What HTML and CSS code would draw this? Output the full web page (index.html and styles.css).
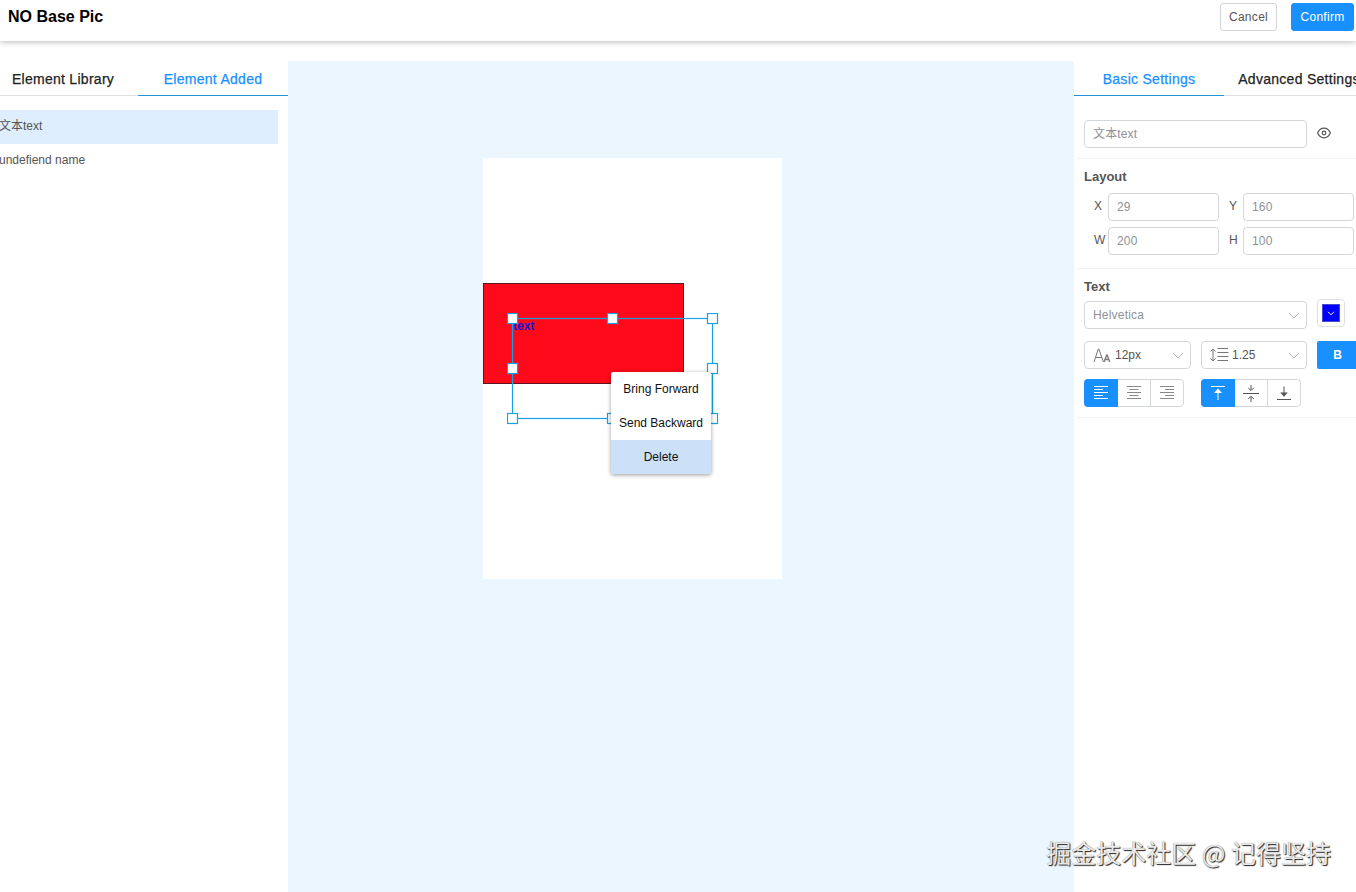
FILE: index.html
```html
<!DOCTYPE html>
<html>

<head>
  <meta charset="utf-8">
  <title>NO Base Pic</title>
  <link rel="stylesheet" href="styles.css">
</head>

<body>
  <div class="header">
    <div class="title">NO Base Pic</div>
    <button class="btn" type="button">Cancel</button>
    <button class="btn primary" type="button">Confirm</button>
  </div>

  <div class="main">
    <div class="left">
      <div class="tabs left-tabs">
        <div class="tab library">Element Library</div>
        <div class="tab added active">Element Added</div>
      </div>
      <div class="list">
        <div class="item selected">文本text</div>
        <div class="item">undefiend name</div>
      </div>
    </div>

    <div class="stage">
      <div class="artboard">
        <div class="rect"></div>
        <div class="label">text</div>
        <svg class="selection" width="212" height="112" viewBox="0 0 212 112">
          <rect class="frame" x="5.500" y="5.500" width="200" height="100"/>
          <rect x=".5" y=".5" width="10" height="10"/>
          <rect x="100.500" y=".5" width="10" height="10"/>
          <rect x="200.500" y=".5" width="10" height="10"/>
          <rect x=".5" y="50.500" width="10" height="10"/>
          <rect x="200.500" y="50.500" width="10" height="10"/>
          <rect x=".5" y="100.500" width="10" height="10"/>
          <rect x="100.500" y="100.500" width="10" height="10"/>
          <rect x="200.500" y="100.500" width="10" height="10"/>
        </svg>
        <div class="menu">
          <div class="menu-item">Bring Forward</div>
          <div class="menu-item">Send Backward</div>
          <div class="menu-item hover">Delete</div>
        </div>
      </div>
    </div>

    <div class="right">
      <div class="tabs">
        <div class="tab basic active">Basic Settings</div>
        <div class="tab advanced">Advanced Settings</div>
      </div>

      <div class="section name-section">
        <input class="input wide" type="text" value="文本text">
        <svg class="eye" width="14" height="12" viewBox="0 0 14 12">
          <path d="M.6 6C2 3 4.2 1.2 7 1.2S12 3 13.4 6C12 9 9.800 10.800 7 10.800S2 9 .6 6z"/>
          <circle cx="7" cy="6" r="1.800"/>
        </svg>
      </div>

      <div class="section layout-section">
        <div class="heading">Layout</div>
        <div class="grid">
          <label>X</label><input class="input" type="text" value="29">
          <label>Y</label><input class="input" type="text" value="160">
          <label>W</label><input class="input" type="text" value="200">
          <label>H</label><input class="input" type="text" value="100">
        </div>
      </div>

      <div class="section text-section">
        <div class="heading">Text</div>
        <div class="row font-row">
          <div class="select wide">
            <span class="value muted">Helvetica</span>
            <svg class="arrow" width="12" height="7" viewBox="0 0 12 7"><path d="M1 1l5 5 5-5"/></svg>
          </div>
          <div class="picker">
            <div class="color">
              <svg width="8" height="5" viewBox="0 0 8 5"><path d="M1 .8l3 3 3-3"/></svg>
            </div>
          </div>
        </div>
        <div class="row size-row">
          <div class="select size">
            <svg class="icon" width="18" height="15" viewBox="0 0 18 15">
              <path d="M1 14L5.300 1h.6L10.400 14M2.600 9.500h6.300"/>
              <path class="thick" d="M11 14l2.700-7h.4l2.700 7M12 11.500h3.800"/>
            </svg>
            <span class="value">12px</span>
            <svg class="arrow" width="12" height="7" viewBox="0 0 12 7"><path d="M1 1l5 5 5-5"/></svg>
          </div>
          <div class="select line">
            <svg class="icon" width="19" height="14" viewBox="0 0 19 14">
              <path d="M3 1v12M.5 3.500L3 1l2.500 2.500M.5 10.500L3 13l2.500-2.500M7.500 .5H18M7.500 4.500H18.500M7.500 8.500H18.500M7.500 12.500H18"/>
            </svg>
            <span class="value">1.25</span>
            <svg class="arrow" width="12" height="7" viewBox="0 0 12 7"><path d="M1 1l5 5 5-5"/></svg>
          </div>
          <button class="bold" type="button">B</button>
        </div>
        <div class="row align-row">
          <div class="group">
            <div class="cell on">
              <svg width="14" height="14" viewBox="0 0 14 14"><path d="M0 .5h14M0 3.500h9M0 6.500h14M0 9.500h9M0 12.500h14"/></svg>
            </div>
            <div class="cell">
              <svg width="14" height="14" viewBox="0 0 14 14"><path d="M0 .5h14M2.500 3.500h9M0 6.500h14M2.500 9.500h9M0 12.500h14"/></svg>
            </div>
            <div class="cell">
              <svg width="14" height="14" viewBox="0 0 14 14"><path d="M0 .5h14M5 3.500h9M0 6.500h14M5 9.500h9M0 12.500h14"/></svg>
            </div>
          </div>
          <div class="group">
            <div class="cell on">
              <svg width="14" height="16" viewBox="0 0 14 16"><path d="M0 1.500h14M7 4v11"/><path class="fill" d="M7 3.500L11 8H3z"/></svg>
            </div>
            <div class="cell dark">
              <svg width="16" height="18" viewBox="0 0 16 18"><path d="M0 9.500h16M8 1v5M8 18v-5M5.200 3.800L8 6.600l2.800-2.800M5.200 15L8 12.200l2.800 2.800"/></svg>
            </div>
            <div class="cell dark">
              <svg width="14" height="16" viewBox="0 0 14 16"><path d="M7 1.500v9"/><path d="M0 14.500h14"/><path class="fill" d="M7 11.800L3.200 7.500h7.600z"/></svg>
            </div>
          </div>
        </div>
      </div>
    </div>
  </div>

  <div class="watermark">掘金技术社区 @ 记得坚持</div>
</body>

</html>
```

FILE: styles.css
```css
* {
  box-sizing: border-box;
}

body {
  margin: 0;
  height: 892px;
  overflow: hidden;
  background: #fff;
  color: #555;
  font-family: "Liberation Sans", "Noto Sans CJK SC", sans-serif;
  font-size: 12px;
}

svg {
  display: block;
  flex: none;
  fill: none;
  stroke: currentColor;
}

.header {
  display: flex;
  height: 41px;
  padding: 3px 2px 0 8px;
  box-shadow: 0 1px 6px rgba(0, 0, 0, 0.28);
}

.title {
  flex: 1;
  color: #000;
  font-size: 16px;
  font-weight: bold;
  line-height: 27px;
}

.btn {
  height: 28px;
  width: 57px;
  padding: 0;
  border: 1px solid #d4d4d8;
  border-radius: 3px;
  background: #fff;
  color: #555;
  font-family: inherit;
  font-size: 12px;
  letter-spacing: 0.3px;
}

.btn.primary {
  width: 63px;
  margin-left: 14px;
  border-color: #1890ff;
  background: #1890ff;
  color: #fff;
}

.main {
  display: flex;
  height: 831px;
  margin-top: 20px;
}

.left {
  width: 288px;
  overflow: hidden;
}

.tabs {
  display: flex;
  width: 300px;
  height: 35px;
}

.left-tabs {
  margin-left: -12px;
}

.tab {
  width: 150px;
  border-bottom: 1px solid #dfe1e5;
  color: #222;
  font-size: 14px;
  letter-spacing: 0.28px;
  line-height: 36px;
  text-align: center;
  white-space: nowrap;
  -webkit-text-stroke: 0.25px;
}

.tab.active {
  border-bottom-color: #2593dc;
  color: #1890ff;
}

.list {
  width: 278px;
  margin-top: 14px;
}

.item {
  height: 34px;
  margin-left: -1px;
  line-height: 32px;
}

.item.selected {
  background: #dfeefe;
}

.stage {
  width: 786px;
  padding: 97px 0 0 195px;
  background: #ebf6ff;
}

.artboard {
  position: relative;
  width: 299px;
  height: 421px;
  background: #fff;
}

.rect {
  position: absolute;
  left: 0;
  top: 125px;
  width: 201px;
  height: 101px;
  border: 1px solid #5a1520;
  background: #ff0a1b;
}

.label {
  position: absolute;
  left: 30px;
  top: 161px;
  color: #1414d8;
  font-weight: bold;
  line-height: 14px;
}

.selection {
  position: absolute;
  left: 24px;
  top: 155px;
  fill: #fff;
  stroke: #18a0e6;
  stroke-width: 1.200;
}

.selection .frame {
  fill: none;
}

.menu {
  position: absolute;
  left: 128px;
  top: 214px;
  width: 100px;
  border-radius: 2px;
  background: #fff;
  box-shadow: 0 1px 4px rgba(0, 0, 0, 0.4);
  color: #111;
}

.menu-item {
  height: 34px;
  line-height: 34px;
  text-align: center;
  white-space: nowrap;
}

.menu-item.hover {
  background: #cce0f8;
}

.right {
  width: 282px;
  overflow: hidden;
}

.section {
  margin-left: 3px;
  padding-left: 7px;
  border-bottom: 1px solid #f1f2f3;
}

.input,
.select {
  height: 28px;
  border: 1px solid #d4d7da;
  border-radius: 4px;
  background: #fff;
}

.input {
  width: 111px;
  padding: 0 8px;
  color: #8e9296;
  font-family: inherit;
  font-size: 12px;
  letter-spacing: 0.15px;
}

.input.wide,
.select.wide {
  width: 223px;
}

.input.wide {
  padding-bottom: 3px;
}

.name-section {
  display: flex;
  height: 63px;
  padding-top: 24px;
}

.eye {
  margin: 7px 0 0 10px;
  stroke-width: 1.200;
}

.heading {
  font-size: 13px;
  font-weight: bold;
  line-height: 16px;
}

.layout-section {
  height: 110px;
  padding-top: 10px;
}

.grid {
  display: grid;
  grid-template-columns: 24px 111px 24px 111px;
  row-gap: 6px;
  margin-top: 8px;
}

.grid label {
  padding-left: 10px;
  line-height: 26px;
}

.text-section {
  height: 149px;
  padding-top: 10px;
}

.row {
  display: flex;
  gap: 10px;
}

.select {
  display: flex;
  flex: none;
  align-items: center;
  padding: 0 6px 0 8px;
}

.value {
  flex: 1;
}

.muted {
  color: #8e9296;
  letter-spacing: 0.2px;
}

.arrow {
  stroke: #b4b8be;
}

.font-row {
  margin-top: 6px;
}

.picker {
  width: 28px;
  height: 28px;
  margin-top: -2px;
  padding: 4px;
  border: 1px solid #dcdfe6;
  border-radius: 4px;
}

.color {
  display: flex;
  align-items: center;
  justify-content: center;
  height: 18px;
  border: 1px solid #4a4ad0;
  background: #0000ff;
  color: #fff;
}

.size-row {
  margin-top: 12px;
}

.size {
  width: 107px;
}

.line {
  width: 106px;
}

.icon {
  margin-right: 4px;
  color: #777;
}

.line .icon {
  margin-right: 3px;
}

.thick {
  stroke-width: 1.300;
}

.bold {
  flex: none;
  width: 41px;
  height: 28px;
  padding: 0;
  border: 0;
  border-radius: 2px;
  background: #1890ff;
  color: #fff;
  font-family: inherit;
  font-size: 12px;
  font-weight: bold;
}

.align-row {
  gap: 17px;
  margin-top: 10px;
}

.group {
  display: flex;
  width: 100px;
  height: 28px;
  border: 1px solid #d4d7da;
  border-radius: 4px;
}

.cell {
  display: flex;
  flex: 1;
  align-items: center;
  justify-content: center;
  color: #888;
}

.cell + .cell + .cell {
  border-left: 1px solid #d4d7da;
}

.cell.dark {
  color: #555;
}

.cell.on {
  flex: none;
  width: 34px;
  margin: -1px 0 -1px -1px;
  border-radius: 4px 0 0 4px;
  background: #1890ff;
  color: #fff;
}

.fill {
  fill: currentColor;
  stroke: none;
}

.watermark {
  position: absolute;
  right: 25px;
  bottom: 22px;
  color: #eaeaea;
  font-family: "Noto Sans CJK SC", sans-serif;
  font-size: 25px;
  line-height: 36px;
  white-space: nowrap;
  text-shadow: 1px 1px 1px #222, 0 0 1px #777;
}
```
